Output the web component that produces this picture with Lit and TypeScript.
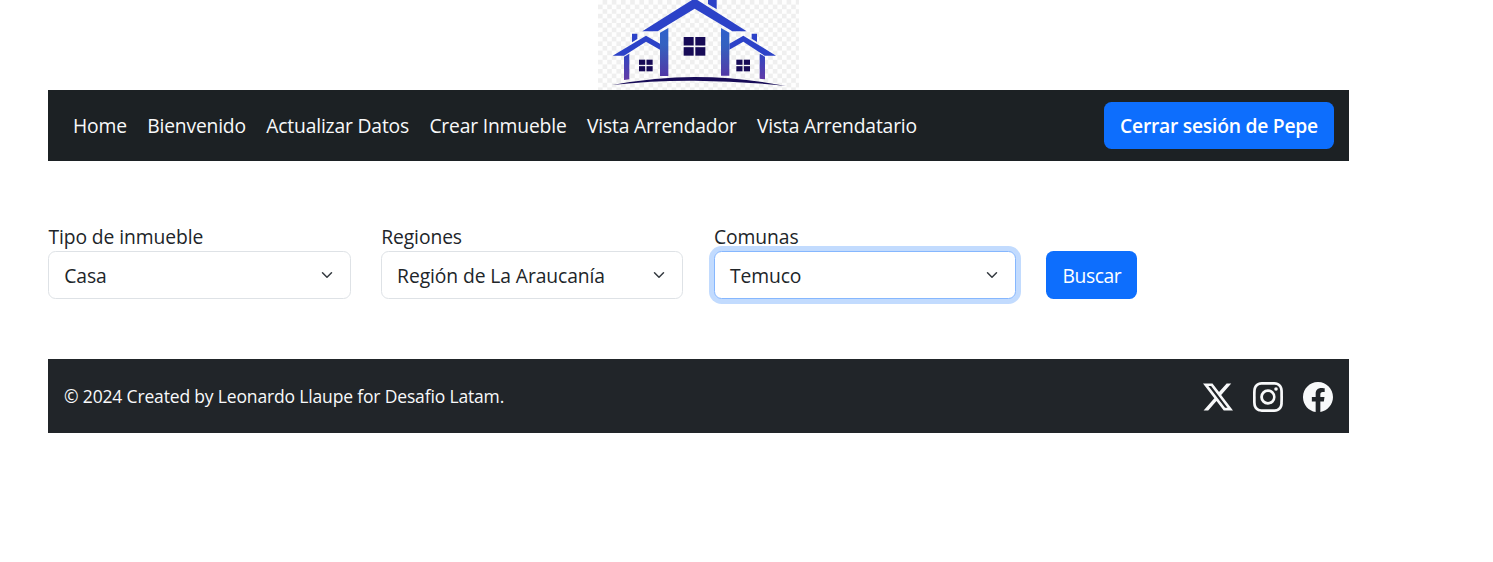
import { LitElement, html, svg, css } from "lit";
import { customElement, property } from "lit/decorators.js";

@customElement("brand-logo")
class BrandLogo extends LitElement {
  static styles = css`
    :host { display: block; width: 201px; height: 90px; }
    svg { display: block; }
  `;

  private window(x: number, y: number, w: number, h: number, gap: number) {
    const cw = (w - gap) / 2;
    const ch = (h - gap) / 2;
    return svg`
      <rect x=${x} y=${y} width=${cw} height=${ch} />
      <rect x=${x + cw + gap} y=${y} width=${cw} height=${ch} />
      <rect x=${x} y=${y + ch + gap} width=${cw} height=${ch} />
      <rect x=${x + cw + gap} y=${y + ch + gap} width=${cw} height=${ch} />
    `;
  }

  render() {
    return html`
      <svg width="201" height="90" viewBox="24 0 603 270" preserveAspectRatio="none">
        <defs>
          <pattern id="checker" x="24" y="0" width="27.6" height="27.6" patternUnits="userSpaceOnUse">
            <rect width="27.6" height="27.6" fill="#fefefe" />
            <rect x="13.8" width="13.8" height="13.8" fill="#efefef" />
            <rect y="13.8" width="13.8" height="13.8" fill="#efefef" />
          </pattern>
          <linearGradient id="tall" x1="0" y1="84" x2="0" y2="228" gradientUnits="userSpaceOnUse">
            <stop offset="0" stop-color="#3060cc" />
            <stop offset="0.35" stop-color="#3462c0" />
            <stop offset="1" stop-color="#5238a6" />
          </linearGradient>
          <linearGradient id="short" x1="0" y1="160" x2="0" y2="240" gradientUnits="userSpaceOnUse">
            <stop offset="0" stop-color="#2f46c4" />
            <stop offset="1" stop-color="#633ba6" />
          </linearGradient>
        </defs>
        <rect x="24" width="603" height="270" fill="url(#checker)" />
        <g fill="#2c42c8">
          <path d="M157 94 L306 0 H322 L470 94 H427 L314 26 L203 94 Z" />
          <path d="M354 0 H380 V28 L354 12 Z" />
          <path d="M68 167 L168 107 L210 131 V149 L168 125 L102 167 Z" />
          <path d="M558 167 L460 107 L418 131 V149 L460 125 L524 167 Z" />
          <path d="M126 101 H142 V117 L126 127 Z" />
          <path d="M485 101 H501 V126 L485 116 Z" />
        </g>
        <g fill="url(#tall)">
          <path d="M210 98 L235 84 V228 H210 Z" />
          <path d="M393 84 L418 98 V227 H393 Z" />
        </g>
        <g fill="url(#short)">
          <path d="M102 170 L118 161 V238 L102 240 Z" />
          <path d="M509 161 L525 170 V238 L509 236 Z" />
        </g>
        <g fill="#170b57">
          ${this.window(281, 111, 65, 56, 5)}
          ${this.window(147, 179, 41, 35, 4)}
          ${this.window(439, 179, 41, 35, 4)}
          <path d="M66 255 Q200 231 314 231 Q450 231 588 258 Q450 243 314 242 Q190 241 66 255 Z" />
        </g>
      </svg>
    `;
  }
}

@customElement("select-field")
class SelectField extends LitElement {
  @property() label = "";
  @property() value = "";
  @property({ type: Boolean }) focused = false;

  static styles = css`
    :host { display: block; color: #212529; font-size: 19.3px; letter-spacing: -0.09px; }
    .label { height: 26px; line-height: 24px; white-space: nowrap; padding-left: 0.4px; }
    .box {
      box-sizing: border-box; height: 48px; padding: 0 17px 0 15.3px;
      display: flex; align-items: center; justify-content: space-between;
      border: 1px solid #dee2e6; border-radius: 7.5px; background: #fff;
      line-height: 26px;
    }
    .box.focused { border-color: #86b7fe; box-shadow: 0 0 0 5px rgba(13, 110, 253, 0.25); }
    .value { padding-top: 2px; }
    svg { display: block; }
  `;

  render() {
    return html`
      <div class="label">${this.label}</div>
      <div class="box ${this.focused ? "focused" : ""}">
        <span class="value">${this.value}</span>
        <svg width="12" height="12" viewBox="0 0 16 16" fill="none" stroke="#343a40" stroke-width="2"
          stroke-linecap="round" stroke-linejoin="round"><path d="m2 5 6 6 6-6" /></svg>
      </div>
    `;
  }
}

const navItems = ["Home", "Bienvenido", "Actualizar Datos", "Crear Inmueble", "Vista Arrendador", "Vista Arrendatario"];

const socialIcons = [
  "M12.6.75h2.454l-5.36 6.142L16 15.25h-4.937l-3.867-5.07-4.425 5.07H.316l5.733-6.57L0 .75h5.063l3.495 4.633L12.601.75Zm-.86 13.028h1.36L4.323 2.145H2.865z",
  "M8 0C5.829 0 5.556.01 4.703.048 3.85.088 3.269.222 2.76.42a3.9 3.9 0 0 0-1.417.923A3.9 3.9 0 0 0 .42 2.76C.222 3.268.087 3.85.048 4.7.01 5.555 0 5.827 0 8.001c0 2.172.01 2.444.048 3.297.04.852.174 1.433.372 1.942.205.526.478.972.923 1.417.444.445.89.719 1.416.923.51.198 1.09.333 1.942.372C5.555 15.99 5.827 16 8 16s2.444-.01 3.298-.048c.851-.04 1.434-.174 1.943-.372a3.9 3.9 0 0 0 1.416-.923c.445-.445.718-.891.923-1.417.197-.509.332-1.09.372-1.942C15.99 10.445 16 10.173 16 8s-.01-2.445-.048-3.299c-.04-.851-.175-1.433-.372-1.941a3.9 3.9 0 0 0-.923-1.417A3.9 3.9 0 0 0 13.24.42c-.51-.198-1.092-.333-1.943-.372C10.443.01 10.172 0 7.998 0zm-.717 1.442h.718c2.136 0 2.389.007 3.232.046.78.035 1.204.166 1.486.275.373.145.64.319.92.599s.453.546.598.92c.11.281.24.705.275 1.485.039.843.047 1.096.047 3.231s-.008 2.389-.047 3.232c-.035.78-.166 1.203-.275 1.485a2.5 2.5 0 0 1-.599.919c-.28.28-.546.453-.92.598-.28.11-.704.24-1.485.276-.843.038-1.096.047-3.232.047s-2.39-.009-3.233-.047c-.78-.036-1.203-.166-1.485-.276a2.5 2.5 0 0 1-.92-.598 2.5 2.5 0 0 1-.6-.92c-.109-.281-.24-.705-.275-1.485-.038-.843-.046-1.096-.046-3.233s.008-2.388.046-3.231c.036-.78.166-1.204.276-1.486.145-.373.319-.64.599-.92s.546-.453.92-.598c.282-.11.705-.24 1.485-.276.738-.034 1.024-.044 2.515-.045zm4.988 1.328a.96.96 0 1 0 0 1.92.96.96 0 0 0 0-1.92m-4.27 1.122a4.109 4.109 0 1 0 0 8.217 4.109 4.109 0 0 0 0-8.217m0 1.441a2.667 2.667 0 1 1 0 5.334 2.667 2.667 0 0 1 0-5.334",
  "M16 8.049c0-4.446-3.582-8.05-8-8.05C3.58 0-.002 3.603-.002 8.05c0 4.017 2.926 7.347 6.75 7.951v-5.625h-2.03V8.05H6.75V6.275c0-2.017 1.195-3.131 3.022-3.131.876 0 1.791.157 1.791.157v1.98h-1.009c-.993 0-1.303.621-1.303 1.258v1.51h2.218l-.354 2.326H9.25V16c3.824-.604 6.75-3.934 6.75-7.951",
];

@customElement("app-root")
class AppRoot extends LitElement {
  static styles = css`
    :host {
      display: block; box-sizing: border-box; height: 562px; overflow: hidden;
      background: #fff; font-family: "Open Sans", "Noto Sans", sans-serif; font-size: 19.3px;
    }
    .container { width: 1301px; margin-left: 48px; }
    .brand { display: flex; justify-content: center; height: 90px; }
    nav {
      box-sizing: border-box; height: 71px; padding: 0 15px 0 25px;
      display: flex; align-items: center; justify-content: space-between; background: #1c2124;
    }
    .links { display: flex; gap: 20.4px; letter-spacing: -0.18px; }
    .link { color: #f8f9fa; text-decoration: none; line-height: 26px; white-space: nowrap; padding-top: 1px; }
    button {
      box-sizing: border-box; border: 0; border-radius: 7.5px; background: #0d6efd; color: #fff;
      padding: 1px 0 0; font-family: inherit; font-size: 19.3px; line-height: 26px; white-space: nowrap;
    }
    .logout { width: 230px; height: 47px; font-weight: 600; letter-spacing: -0.24px; }
    .filters {
      display: grid; grid-template-columns: repeat(3, 302.5px) 91px; column-gap: 30.3px;
      align-items: end; padding: 64px 0 60px;
    }
    .search { height: 48px; letter-spacing: -0.45px; padding-top: 2px; }
    footer {
      box-sizing: border-box; height: 74px; padding: 0 16px 0 16px;
      display: flex; align-items: center; justify-content: space-between;
      background: #212529; color: #f8f9fa;
    }
    .credit { font-size: 17.5px; letter-spacing: -0.16px; line-height: 24px; }
    .social { display: flex; gap: 20px; padding-top: 2px; }
    .social svg { display: block; }
  `;

  render() {
    return html`
      <div class="container">
        <header class="brand"><brand-logo></brand-logo></header>
        <nav>
          <div class="links">${navItems.map((t) => html`<a class="link">${t}</a>`)}</div>
          <button class="logout">Cerrar sesión de Pepe</button>
        </nav>
        <main class="filters">
          <select-field label="Tipo de inmueble" value="Casa"></select-field>
          <select-field label="Regiones" value="Región de La Araucanía"></select-field>
          <select-field label="Comunas" value="Temuco" focused></select-field>
          <button class="search">Buscar</button>
        </main>
        <footer>
          <span class="credit">© 2024 Created by Leonardo Llaupe for Desafio Latam.</span>
          <div class="social">
            ${socialIcons.map((d) => html`<svg width="30" height="30" viewBox="0 0 16 16" fill="#f8f9fa"><path d=${d} /></svg>`)}
          </div>
        </footer>
      </div>
    `;
  }
}
